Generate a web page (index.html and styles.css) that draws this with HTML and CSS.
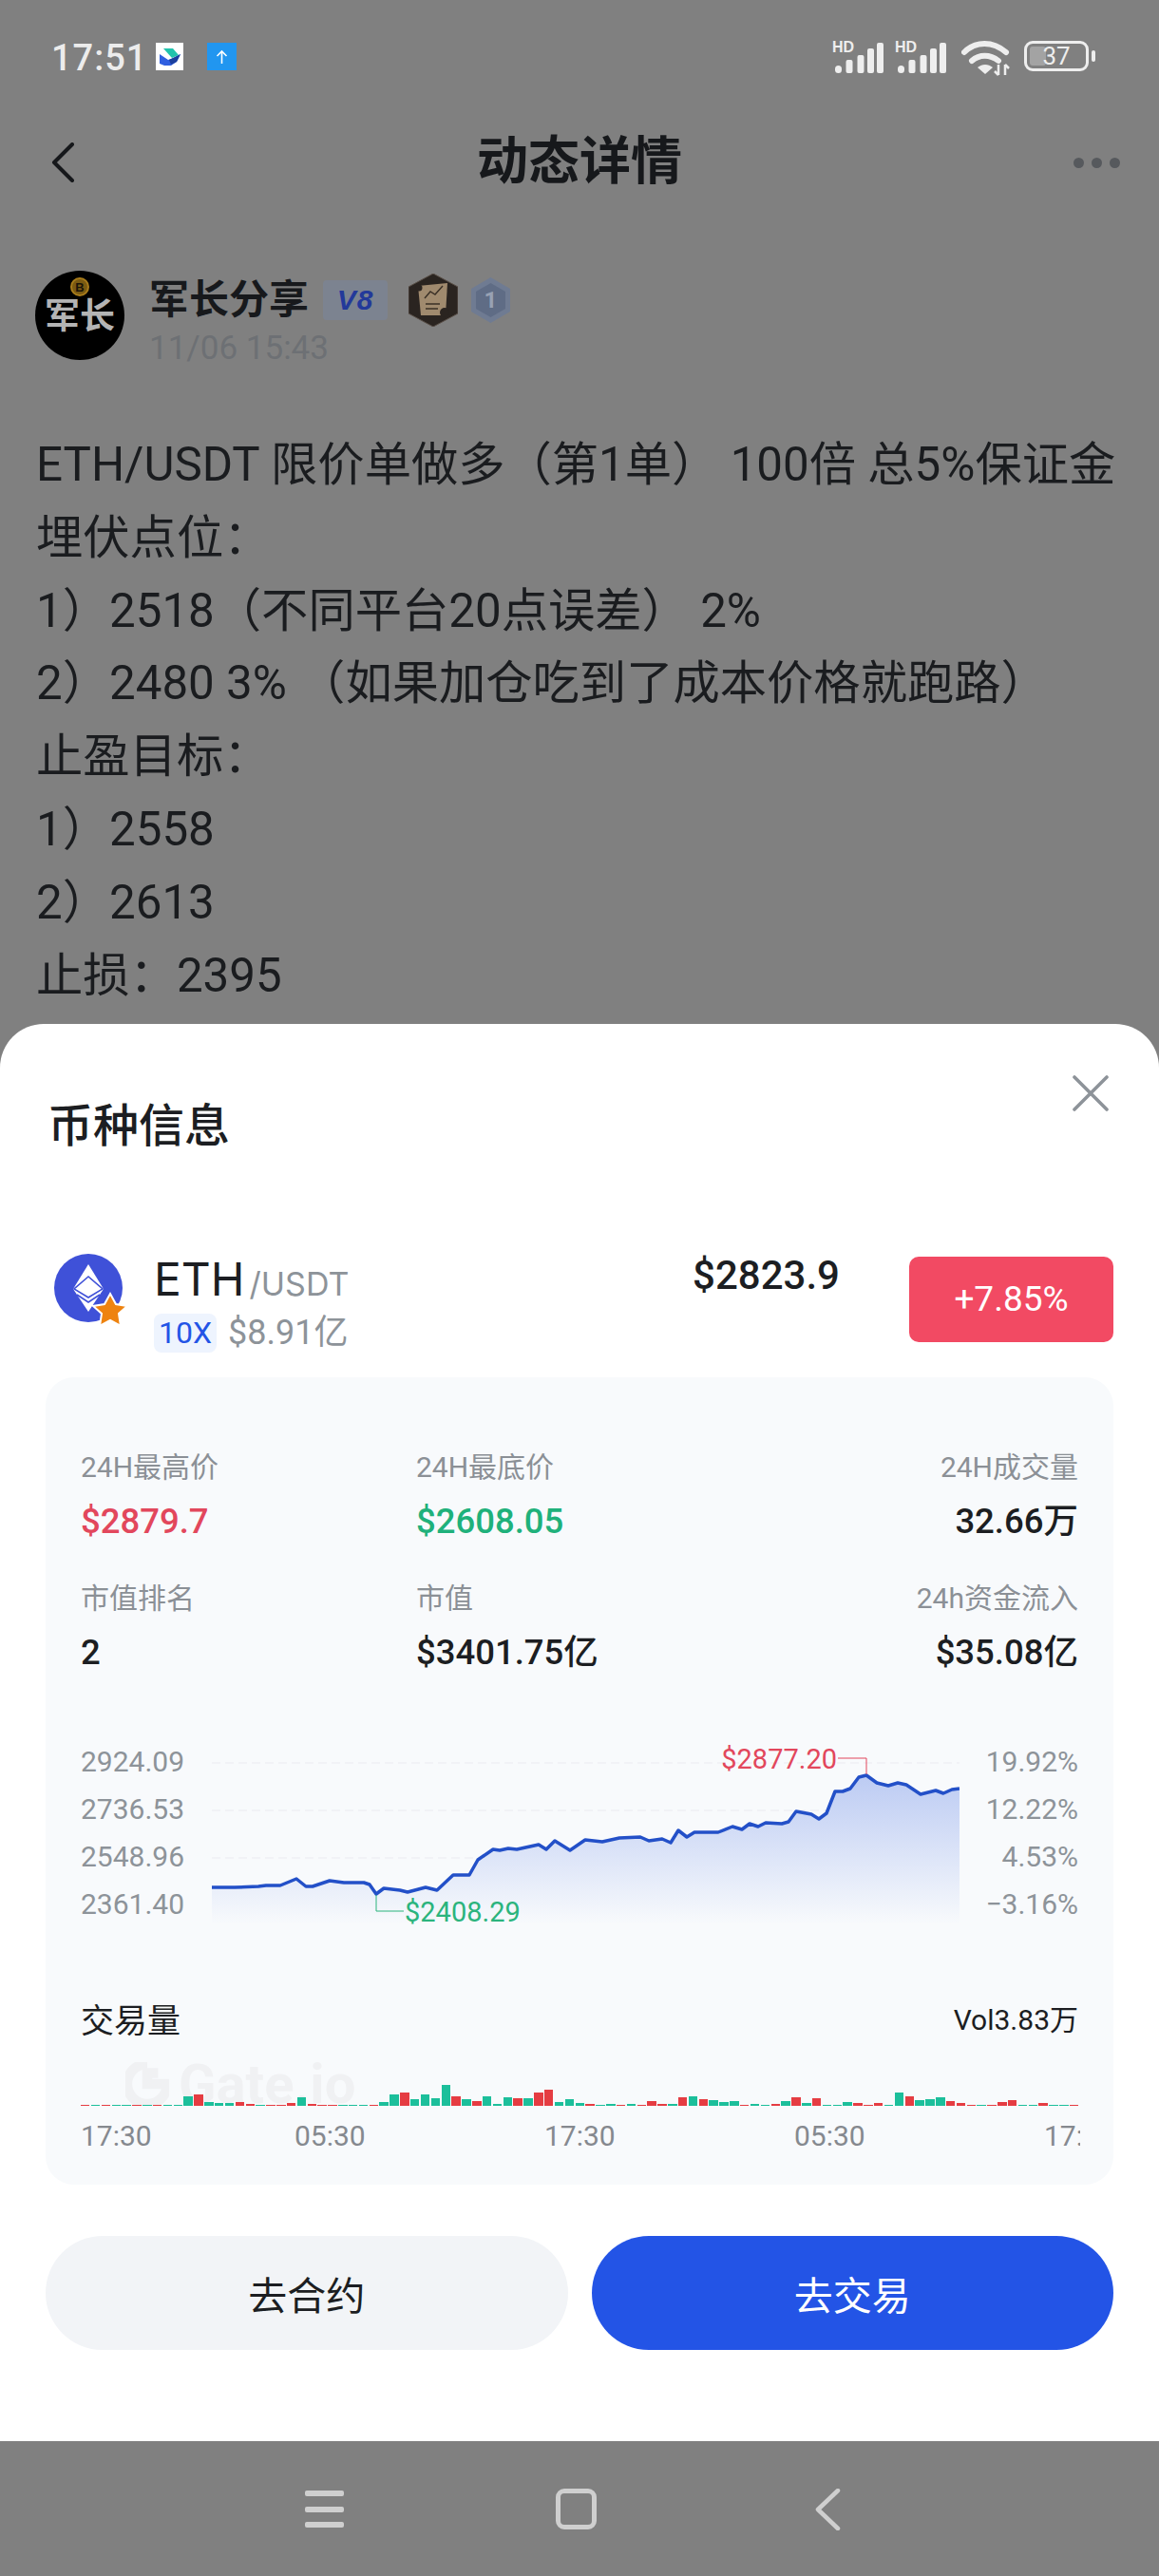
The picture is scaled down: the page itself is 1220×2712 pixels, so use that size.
FILE: index.html
```html
<!DOCTYPE html>
<html lang="zh-CN">
<head>
  <meta charset="UTF-8">
  <meta name="viewport" content="width=device-width,initial-scale=1">
  <title>动态详情</title>
  <link rel="stylesheet" href="styles.css">
</head>
<body>
  <div class="statusBar">
    <span class="clock">17:51</span>
    <svg class="appIcon" viewBox="0 0 29 29"><rect width="29" height="29" fill="#fff"/><path d="M8 6h10l6 7-7 3z" fill="#22c3ad"/><path d="M4 12l9 6 6-2 7-4-4 8-6 4H9l-5-2z" fill="#2f5fe0"/><path d="M14 18l12-6-4 8-6 3z" fill="#1b3f9e"/></svg>
    <svg class="uploadIcon" viewBox="0 0 31 29"><rect width="31" height="29" fill="#2196f0"/><path d="M15.5 22V9M10.5 14l5-5 5 5" fill="none" stroke="#fff" stroke-width="1.6"/></svg>
    <div class="statusRight">
      <svg class="signal" viewBox="0 0 54 34"><text x="0" y="12" class="hd">HD</text><g fill="#eee"><rect x="3" y="26" width="7" height="8" rx="3.5"/><rect x="14.5" y="20" width="7" height="14" rx="2"/><rect x="26.5" y="15" width="7" height="19" rx="2"/><rect x="37" y="8" width="7" height="26" rx="2"/><rect x="47" y="2" width="7" height="32" rx="2"/></g></svg>
      <svg class="signal" viewBox="0 0 54 34"><text x="0" y="12" class="hd">HD</text><g fill="#eee"><rect x="3" y="26" width="7" height="8" rx="3.5"/><rect x="14.5" y="20" width="7" height="14" rx="2"/><rect x="26.5" y="15" width="7" height="19" rx="2"/><rect x="37" y="8" width="7" height="26" rx="2"/><rect x="47" y="2" width="7" height="32" rx="2"/></g></svg>
      <svg class="wifi" viewBox="0 0 52 38"><g fill="none" stroke="#eee" stroke-width="6" stroke-linecap="round"><path d="M3 13C15 1 33 1 47 13"/><path d="M11 22c8-7 19-7 28 0"/></g><path d="M17 29c5-4 11-4 16 0l-8 7z" fill="#eee"/><path d="M39 26v11M35 33l4 4M46 37V26M50 30l-4-4" stroke="#eee" stroke-width="2.5" fill="none"/></svg>
      <div class="battery"><span class="batteryFill"></span><span class="batteryNum">37</span></div>
      <span class="batteryNub"></span>
    </div>
  </div>

  <div class="pageHeader">
    <svg class="backIcon" viewBox="0 0 24 42"><path d="M22 2L3 21l19 19" fill="none" stroke="#16181b" stroke-width="4" stroke-linecap="round" stroke-linejoin="round"/></svg>
    <h1>动态详情</h1>
    <div class="dots"><i></i><i></i><i></i></div>
  </div>

  <div class="author">
    <div class="avatar">
      <svg class="coin" viewBox="0 0 20 20"><circle cx="10" cy="10" r="9" fill="#7a5a12" stroke="#a87c1a" stroke-width="2"/><text x="10" y="15" class="coinB">B</text></svg>
      <span>军长</span>
    </div>
    <div>
      <div class="nameRow">
        <span class="name">军长分享</span>
        <span class="vip">V8</span>
        <svg class="medal" viewBox="0 0 52 56"><path d="M26 0l26 14v28L26 56 0 42V14z" fill="#2a2420" stroke="#5a5048" stroke-width="1"/><path d="M10 13l31-3-2 34H13z" fill="#a08a6e"/><path d="M17 26l6-7 5 3 8-9M18 32h15M18 37h13" fill="none" stroke="#3a3026" stroke-width="1.4"/><circle cx="38" cy="41" r="5" fill="#2a2420"/><circle cx="11" cy="15" r="3.5" fill="#2a2420"/></svg>
        <svg class="rank" viewBox="0 0 41 48"><path d="M20.5 0L41 12v24L20.5 48 0 36V12z" fill="#6f7b92"/><path d="M20.5 6L36 15v18l-15.5 9L5 33V15z" fill="#5f6c85"/><text x="20.5" y="32" class="rankNum">1</text></svg>
      </div>
      <div class="postTime">11/06 15:43</div>
    </div>
  </div>

  <div class="post">
    <p>ETH/USDT 限价单做多（第1单） 100倍 总5%保证金</p>
    <p>埋伏点位：</p>
    <p>1）2518（不同平台20点误差） 2%</p>
    <p>2）2480 3% （如果加仓吃到了成本价格就跑路）</p>
    <p>止盈目标：</p>
    <p>1）2558</p>
    <p>2）2613</p>
    <p>止损：2395</p>
  </div>

  <div class="sheet">
    <svg class="closeIcon" viewBox="0 0 38 38"><path d="M2 2l34 34M36 2L2 36" stroke="#8d9399" stroke-width="3.6" stroke-linecap="round"/></svg>
    <h2>币种信息</h2>

    <div class="coinRow">
      <svg class="ethIcon" viewBox="0 0 78 78">
        <circle cx="36" cy="36" r="36" fill="#3f51d8"/>
        <path d="M36 11l16 26-16 24-16-24z" fill="#fff"/>
        <path d="M36 24L21 37l15 9 15-9z" fill="none" stroke="#3f51d8" stroke-width="1.6"/>
        <path d="M24 43l12 8 12-8" fill="none" stroke="#3f51d8" stroke-width="1.6"/>
        <path d="M59 42l6 11 12 2-9 8 2 13-11-6-11 6 2-13-9-8 12-2z" fill="#ee8310" stroke="#fff" stroke-width="2"/>
      </svg>
      <div class="coinInfo">
        <div class="pair"><span class="sym">ETH</span><span class="quote">/USDT</span></div>
        <div class="coinSub"><span class="lever">10X</span><span class="cap">$8.91亿</span></div>
      </div>
      <div class="price">$2823.9</div>
      <div class="change">+7.85%</div>
    </div>

    <div class="panel">
      <div class="stats">
        <div><div class="statLabel">24H最高价</div><div class="statVal up">$2879.7</div></div>
        <div><div class="statLabel">24H最底价</div><div class="statVal down">$2608.05</div></div>
        <div class="alignEnd"><div class="statLabel">24H成交量</div><div class="statVal">32.66万</div></div>
        <div><div class="statLabel">市值排名</div><div class="statVal">2</div></div>
        <div><div class="statLabel">市值</div><div class="statVal">$3401.75亿</div></div>
        <div class="alignEnd"><div class="statLabel">24h资金流入</div><div class="statVal">$35.08亿</div></div>
      </div>

      <div class="chart">
        <div class="axis">
          <span>2924.09</span><span>2736.53</span><span>2548.96</span><span>2361.40</span>
        </div>
        <svg class="plot" viewBox="223 1830 787 200">
          <defs>
            <linearGradient id="areaFill" gradientUnits="userSpaceOnUse" x1="0" y1="1869" x2="0" y2="2026">
              <stop offset="0" stop-color="#bccbf3"/>
              <stop offset="1" stop-color="#f8fafc"/>
            </linearGradient>
          </defs>
          <g stroke="#eef0f3" stroke-width="1.5" stroke-dasharray="9 5">
            <path d="M223 1856H1010M223 1906H1010M223 1956H1010M223 2006H1010"/>
          </g>
          <path fill="url(#areaFill)" d="M223 1987L247 1987 272 1986 280 1985 295 1985 312 1978 322 1986 329 1986 347 1980 362 1982 383 1982 389 1984 396 1994 404 1988 421 1990 429 1992 448 1987 460 1990 477 1974 494 1974 503 1958 519 1947 526 1948 535 1946 544 1947 567 1942 575 1947 584 1938 600 1948 616 1937 634 1939 652 1935 674 1934 683 1938 697 1936 706 1940 714 1927 723 1934 731 1929 756 1929 771 1923 781 1926 789 1920 798 1923 806 1919 823 1920 830 1918 838 1907 854 1910 862 1915 870 1909 879 1886 887 1886 895 1883 904 1871 912 1869 923 1877 935 1880 945 1877 954 1879 969 1889 985 1885 993 1888 1002 1884 1010 1883V2026H223Z"/>
          <path fill="none" stroke="#2350c8" stroke-width="3.5" stroke-linejoin="round" d="M223 1987L247 1987 272 1986 280 1985 295 1985 312 1978 322 1986 329 1986 347 1980 362 1982 383 1982 389 1984 396 1994 404 1988 421 1990 429 1992 448 1987 460 1990 477 1974 494 1974 503 1958 519 1947 526 1948 535 1946 544 1947 567 1942 575 1947 584 1938 600 1948 616 1937 634 1939 652 1935 674 1934 683 1938 697 1936 706 1940 714 1927 723 1934 731 1929 756 1929 771 1923 781 1926 789 1920 798 1923 806 1919 823 1920 830 1918 838 1907 854 1910 862 1915 870 1909 879 1886 887 1886 895 1883 904 1871 912 1869 923 1877 935 1880 945 1877 954 1879 969 1889 985 1885 993 1888 1002 1884 1010 1883"/>
          <path d="M396 1995V2012H425" fill="none" stroke="#2bb47d" stroke-width="1"/>
          <text x="426" y="2023" class="mark down">$2408.29</text>
          <path d="M912 1868V1851H882" fill="none" stroke="#e2475c" stroke-width="1"/>
          <text x="881" y="1862" class="mark up endAnchor">$2877.20</text>
        </svg>
        <div class="axis axisRight">
          <span>19.92%</span><span>12.22%</span><span>4.53%</span><span>−3.16%</span>
        </div>
      </div>

      <div class="volHead">
        <span class="volTitle">交易量</span>
        <span class="volNum">Vol3.83万</span>
      </div>

      <div class="bars">
        <div class="watermark">
          <svg viewBox="0 0 48 48"><path d="M24 2a22 22 0 1 0 22 22H24V12h12" fill="none" stroke="#f0f1f3" stroke-width="11"/></svg>
          <span>Gate.io</span>
        </div>
        <i class="r" style="height:1px"></i><i class="g" style="height:1px"></i><i class="r" style="height:1px"></i><i class="g" style="height:1px"></i><i class="g" style="height:1px"></i><i class="r" style="height:1px"></i><i class="g" style="height:1px"></i><i class="r" style="height:1px"></i><i class="g" style="height:1px"></i><i class="g" style="height:1px"></i>
        <i class="g" style="height:10px"></i><i class="r" style="height:12px"></i><i class="g" style="height:4px"></i><i class="g" style="height:3px"></i><i class="g" style="height:3px"></i><i class="r" style="height:4.5px"></i><i class="r" style="height:2px"></i><i class="g" style="height:1.5px"></i><i class="r" style="height:1px"></i><i class="r" style="height:1px"></i><i class="r" style="height:3.5px"></i><i class="g" style="height:9px"></i><i class="r" style="height:2px"></i><i class="r" style="height:1px"></i><i class="r" style="height:1px"></i><i class="g" style="height:1.5px"></i><i class="g" style="height:1px"></i><i class="g" style="height:1px"></i><i class="r" style="height:1.5px"></i><i class="g" style="height:4px"></i><i class="g" style="height:12px"></i><i class="r" style="height:14px"></i><i class="g" style="height:7.5px"></i><i class="g" style="height:12px"></i><i class="g" style="height:8px"></i><i class="g" style="height:22px"></i><i class="r" style="height:10px"></i><i class="g" style="height:7px"></i><i class="r" style="height:5.5px"></i><i class="g" style="height:10px"></i><i class="g" style="height:2.5px"></i><i class="g" style="height:9px"></i><i class="r" style="height:8px"></i><i class="g" style="height:8px"></i><i class="r" style="height:14px"></i><i class="r" style="height:17px"></i><i class="g" style="height:4.5px"></i><i class="g" style="height:7px"></i><i class="g" style="height:3px"></i><i class="r" style="height:2px"></i><i class="g" style="height:1.5px"></i><i class="g" style="height:2px"></i>
        <i class="r" style="height:1px"></i><i class="g" style="height:2.5px"></i><i class="r" style="height:1.5px"></i><i class="r" style="height:5px"></i><i class="r" style="height:2px"></i><i class="g" style="height:2.5px"></i><i class="r" style="height:9.5px"></i><i class="g" style="height:10px"></i><i class="r" style="height:7px"></i><i class="g" style="height:6px"></i><i class="g" style="height:4px"></i><i class="g" style="height:5px"></i><i class="r" style="height:.5px"></i><i class="g" style="height:2px"></i><i class="g" style="height:1.5px"></i><i class="r" style="height:2.5px"></i><i class="g" style="height:5px"></i><i class="r" style="height:9.5px"></i><i class="g" style="height:3px"></i><i class="r" style="height:8px"></i><i class="g" style="height:1px"></i><i class="g" style="height:1px"></i><i class="g" style="height:4px"></i><i class="r" style="height:3px"></i><i class="r" style="height:1px"></i><i class="r" style="height:3px"></i><i class="g" style="height:1.5px"></i><i class="g" style="height:14.5px"></i><i class="r" style="height:10px"></i><i class="g" style="height:6px"></i><i class="g" style="height:7px"></i><i class="g" style="height:9.5px"></i><i class="r" style="height:5.5px"></i><i class="r" style="height:3px"></i><i class="r" style="height:1.5px"></i><i class="g" style="height:1.5px"></i><i class="r" style="height:.5px"></i><i class="r" style="height:4px"></i><i class="r" style="height:6px"></i><i class="g" style="height:1.5px"></i><i class="g" style="height:1.5px"></i><i class="r" style="height:3px"></i><i class="g" style="height:1.5px"></i><i class="g" style="height:.5px"></i><i class="r" style="height:.5px"></i>
      </div>

      <div class="times">
        <span class="timeFirst">17:30</span><span>05:30</span><span>17:30</span><span>05:30</span><span>17:30</span>
      </div>
    </div>

    <div class="actions">
      <button class="btn btnGrey">去合约</button>
      <button class="btn btnBlue">去交易</button>
    </div>
  </div>

  <div class="navBar">
    <div class="navMenu"><i></i><i></i><i></i></div>
    <span class="navHome"></span>
    <svg class="navBack" viewBox="0 0 28 44"><path d="M25 2L4 22l21 20" fill="none" stroke="#cfcfcf" stroke-width="4.5" stroke-linecap="round" stroke-linejoin="round"/></svg>
  </div>
</body>
</html>
```

FILE: styles.css
```css
* { box-sizing:border-box; }
html, body { margin:0; padding:0; }
body { width:1220px; height:2712px; overflow:hidden; background:#808080; display:flex; flex-direction:column; font-family:Roboto, "Noto Sans CJK SC", sans-serif; color:#1a1c1f; }
h1, h2, p { margin:0; font-weight:normal; }

.statusBar { height:122px; padding:43px 67px 0 54px; display:flex; align-items:flex-start; flex-shrink:0; }
.clock { font-size:38px; line-height:36px; font-weight:500; color:#ececec; letter-spacing:1px; width:110px; }
.appIcon { width:29px; height:29px; margin-top:2px; }
.uploadIcon { width:31px; height:29px; margin-top:2px; margin-left:25px; }
.statusRight { margin-left:auto; display:flex; align-items:flex-start; }
.signal { width:54px; height:34px; margin-right:12px; overflow:visible; }
.hd { font:bold 16px "Liberation Sans", sans-serif; fill:#eee; }
.wifi { width:52px; height:38px; margin-left:4px; margin-top:-1px; }
.battery { width:68px; height:32px; margin-left:14px; border:3px solid #eee; border-radius:9px; position:relative; }
.batteryFill { position:absolute; left:3px; top:3px; bottom:3px; width:17px; background:#a3a3a3; border-radius:3px; }
.batteryNum { position:absolute; left:0; right:0; top:0; text-align:center; font-size:26px; line-height:26px; color:#eee; }
.batteryNub { width:4px; height:12px; margin:10px 0 0 3px; border-radius:2px; background:#eee; }

.pageHeader { height:98px; padding:0 41px 0 54px; display:flex; align-items:center; justify-content:space-between; flex-shrink:0; position:relative; }
.pageHeader h1 { position:absolute; left:0; right:0; text-align:center; font-size:54px; line-height:98px; font-weight:700; color:#16181b; }
.backIcon { width:24px; height:42px; }
.dots { display:flex; gap:8px; }
.dots i { width:11px; height:11px; border-radius:50%; background:#56595d; }

.author { margin-top:65px; padding-left:37px; display:flex; gap:26px; flex-shrink:0; }
.avatar { width:94px; height:94px; border-radius:50%; background:#000; display:flex; flex-direction:column; align-items:center; color:#b4b4b4; font-size:37px; line-height:40px; font-weight:700; padding-top:7px; }
.coin { width:20px; height:20px; margin-bottom:2px; }
.coinB { font:700 13px "Liberation Sans", sans-serif; fill:#1a1408; text-anchor:middle; }
.nameRow { display:flex; align-items:center; height:58px; margin-top:2px; }
.name { font-size:42px; line-height:58px; font-weight:700; color:#17191c; width:183px; }
.vip { width:68px; height:42px; background:#7c8390; border-radius:4px; color:#23399a; font:italic 700 30px/42px "Liberation Sans", sans-serif; text-align:center; letter-spacing:1px; }
.medal { width:52px; height:56px; margin-left:22px; }
.rank { width:41px; height:48px; margin-left:14px; }
.rankNum { font:700 24px Roboto, sans-serif; fill:#98a1b3; text-anchor:middle; }
.postTime { font-size:35px; line-height:36px; color:#6d7074; margin-top:4px; }

.post { margin-top:66px; padding-left:38px; flex:1; overflow:hidden; font-size:49.3px; line-height:76.8px; color:#1a1c1f; white-space:nowrap; }

.sheet { height:1492px; flex-shrink:0; background:#fff; border-radius:46px 46px 0 0; padding:78px 48px 0; position:relative; }
.closeIcon { position:absolute; top:54px; right:53px; width:38px; height:38px; }
.sheet h2 { font-size:48px; line-height:60px; font-weight:500; color:#1c1e22; padding-left:2px; }

.coinRow { margin-top:104px; height:110px; display:flex; align-items:flex-start; }
.ethIcon { width:78px; height:78px; margin-left:9px; }
.coinInfo { margin-left:27px; flex:1; }
.pair { height:56px; display:flex; align-items:baseline; line-height:54px; }
.sym { font-family:Inter, sans-serif; font-size:48px; color:#1c1e22; }
.quote { font-family:Inter, sans-serif; font-size:34px; color:#8d9399; margin-left:5px; }
.coinSub { display:flex; align-items:center; margin-top:7px; }
.lever { width:66px; height:41px; background:#eef4fe; border-radius:8px; color:#2354e6; font-size:32px; line-height:41px; text-align:center; }
.cap { font-size:36px; line-height:41px; color:#8d9399; margin-left:12px; }
.price { font-size:42px; line-height:46px; font-weight:500; color:#1c1e22; margin-top:0; }
.change { width:215px; height:90px; margin:3px 0 0 73px; background:#f24a63; border-radius:10px; color:#fff; font-size:37px; line-height:90px; text-align:center; }

.panel { margin-top:20px; height:850px; background:#f8fafc; border-radius:30px; padding:73px 37px 0; }
.stats { display:grid; grid-template-columns:353px 1fr 1fr; row-gap:37px; }
.statLabel { font-size:30px; line-height:44px; color:#8b9096; }
.statVal { font-size:36.5px; line-height:44px; font-weight:500; color:#1c1e22; margin-top:13px; }
.alignEnd { text-align:right; }
.up { color:#e2475c; fill:#e2475c; }
.down { color:#1fb17b; fill:#2bb47d; }

.chart { margin-top:69px; height:200px; display:flex; }
.axis { width:138px; flex-shrink:0; display:flex; flex-direction:column; font-size:30px; line-height:50px; color:#8d9399; margin-top:-1px; }
.axisRight { width:125px; margin-right:-2px; text-align:right; }
.plot { width:787px; height:200px; flex-shrink:0; margin-top:-1px; }
.mark { font-family:Roboto, sans-serif; font-size:29px; }
.endAnchor { text-anchor:end; }

.volHead { margin-top:71px; height:44px; display:flex; justify-content:space-between; align-items:center; }
.volTitle { font-size:35px; color:#1c1e22; }
.volNum { font-size:30px; color:#1c1e22; }

.bars { margin-top:11px; height:60px; display:flex; align-items:flex-end; gap:1.37px; position:relative; }
.bars i { flex:1; min-height:1px; position:relative; }
.bars .g { background:#1cbf9b; }
.bars .r { background:#e53c42; }
.watermark { position:absolute; left:47px; bottom:-6px; display:flex; align-items:center; gap:10px; font-size:58px; line-height:58px; font-weight:700; color:#f0f1f3; white-space:nowrap; }
.watermark svg { width:46px; height:46px; }

.times { margin:12px -2px 0 0; height:40px; display:flex; overflow:hidden; font-size:30px; line-height:40px; color:#85898f; }
.times span { flex:0 0 263px; white-space:nowrap; }
.times .timeFirst { flex-basis:225px; }

.actions { margin-top:54px; display:flex; gap:25px; }
.btn { flex:1; height:120px; border:0; border-radius:60px; font-family:inherit; font-size:41px; }
.btnGrey { background:#f2f4f7; color:#1c1e22; }
.btnBlue { background:#2354e6; color:#fff; }

.navBar { height:142px; flex-shrink:0; display:flex; align-items:flex-start; padding:50px 0 0 321px; }
.navMenu { width:41px; height:39px; margin-top:2px; display:flex; flex-direction:column; justify-content:space-between; }
.navMenu i { height:6px; border-radius:2px; background:#cfcfcf; }
.navHome { width:43px; height:43px; margin-left:223px; border:5px solid #cfcfcf; border-radius:9px; }
.navBack { width:28px; height:44px; margin-left:229px; }
```
